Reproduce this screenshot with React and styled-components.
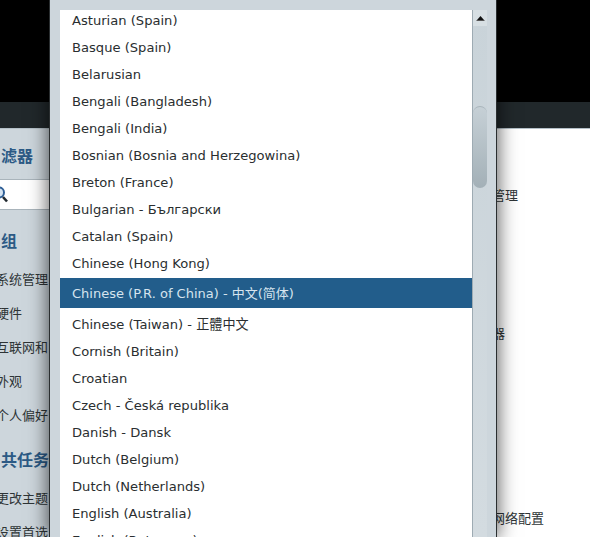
import React from "react";
import styled, { createGlobalStyle } from "styled-components";

const Global = createGlobalStyle`
  html, body { margin: 0; padding: 0; background: #000; }
  body { font-family: "DejaVu Sans", "Noto Sans CJK SC", sans-serif; overflow: hidden; }
`;

const CJK = `"DejaVu Sans", "Noto Sans CJK SC", sans-serif`;

const Screen = styled.div`
  position: relative;
  width: 590px;
  height: 537px;
  overflow: hidden;
  display: flex;
  flex-direction: column;
  background: #000;
`;
const Black = styled.div`height: 102px; flex: none; background: #000;`;
const Toolbar = styled.div`
  height: 26px;
  flex: none;
  background: #21282b;
  border-bottom: 1px solid #b4c0c8;
`;
const Body = styled.div`
  flex: 1;
  display: flex;
  min-height: 0;
`;
const Sidebar = styled.aside`
  width: 60px;
  flex: none;
  background: #cdd6dc;
  display: flex;
  flex-direction: column;
  overflow: hidden;
  padding-top: 17px;
  & > * { flex: none; }
`;
const FilterTitle = styled.h3`
  margin: 0;
  height: 20px;
  font: bold 16px/21px ${CJK};
  color: #2c5a85;
  white-space: nowrap;
  padding-left: 1px;
`;
const SearchBox = styled.div`
  margin-top: 13px;
  height: 29px;
  background: #fff;
  border-top: 1px solid #a9b4bb;
  border-bottom: 1px solid #a9b4bb;
  display: flex;
  align-items: center;
  margin-left: -6px;
`;
const GroupTitle = styled(FilterTitle)`
  margin-top: ${(p) => p.$top}px;
`;
const Item = styled.div`
  margin-top: ${(p) => p.$top ?? 17}px;
  margin-left: -4px;
  height: 17px;
  font: 13px/17px ${CJK};
  color: #2e3436;
  white-space: nowrap;
`;
const Main = styled.main`
  flex: 1;
  background: #fff;
  display: flex;
  flex-direction: column;
  padding-left: 432px;
  padding-top: 58px;
  overflow: hidden;
  & > * { flex: none; }
`;
const MainItem = styled.div`
  margin-top: ${(p) => p.$top ?? 0}px;
  height: 17px;
  font: 13px/17px ${CJK};
  color: #2e3436;
  white-space: nowrap;
`;
const Dialog = styled.div`
  position: absolute;
  left: 49px;
  top: 0;
  width: 448px;
  height: 537px;
  box-sizing: border-box;
  background: #cdd6dc;
  border-left: 1px solid #2a2e30;
  border-right: 1px solid #2a2e30;
  box-shadow: 0 0 18px 1px rgba(0, 0, 0, 0.65);
  padding: 10px 10px 0;
  display: flex;
`;
const List = styled.ul`
  list-style: none;
  margin: 0;
  padding: 0;
  width: 412px;
  flex: none;
  background: #fff;
  overflow: hidden;
  border-right: 1px solid #9eabb3;
`;
const Row = styled.li`
  height: ${(p) => (p.$selected ? 30 : 27)}px;
  line-height: ${(p) => (p.$selected ? 32 : 27)}px;
  margin: ${(p) => (p.$selected ? "1px 0 3px" : "0")};
  padding-left: 12px;
  font-size: ${(p) => (p.$selected ? 13 : 13.1)}px;
  color: ${(p) => (p.$selected ? "#d6e4ee" : "#2a2e30")};
  background: ${(p) => (p.$selected ? "#225d8b" : "transparent")};
  white-space: nowrap;
  &:first-child { margin-top: -3px; }
`;
const Scrollbar = styled.div`
  width: 14px;
  flex: none;
  display: flex;
  flex-direction: column;
  background: linear-gradient(to bottom, #c9d3d9, #d3dbe0);
`;
const ArrowButton = styled.div`
  height: 16px;
  background: #d7dfe3;
  display: flex;
  align-items: center;
  justify-content: center;
  color: #111;
`;
const Thumb = styled.div`
  margin-top: 80px;
  height: 81px;
  border-radius: 7px;
  background: linear-gradient(to bottom, #c6d0d6, #a3b0b7);
  border-top: 1px solid #a8b4bb;
`;

const rows = [
  "Asturian (Spain)", "Basque (Spain)", "Belarusian", "Bengali (Bangladesh)", "Bengali (India)",
  "Bosnian (Bosnia and Herzegowina)", "Breton (France)", "Bulgarian - Български", "Catalan (Spain)",
  "Chinese (Hong Kong)", "Chinese (P.R. of China) - 中文(简体)", "Chinese (Taiwan) - 正體中文",
  "Cornish (Britain)", "Croatian", "Czech - Česká republika", "Danish - Dansk", "Dutch (Belgium)",
  "Dutch (Netherlands)", "English (Australia)", "English (Botswana)",
];

export default function App() {
  return (
    <Screen>
      <Global />
      <Black />
      <Toolbar />
      <Body>
        <Sidebar>
          <FilterTitle>滤器</FilterTitle>
          <SearchBox>
            <svg width="16" height="18" viewBox="0 0 16 18">
              <circle cx="5" cy="6.5" r="5" fill="#d5e4f2" stroke="#2f5f96" strokeWidth="2" />
              <path d="M9 11L13 15.5" stroke="#20282e" strokeWidth="2.6" />
            </svg>
          </SearchBox>
          <GroupTitle $top={21}>组</GroupTitle>
          <Item $top={20}>系统管理</Item>
          <Item>硬件</Item>
          <Item>互联网和</Item>
          <Item>外观</Item>
          <Item>个人偏好</Item>
          <GroupTitle $top={26}>共任务</GroupTitle>
          <Item $top={20}>更改主题</Item>
          <Item>设置首选</Item>
        </Sidebar>
        <Main>
          <MainItem>管理</MainItem>
          <MainItem $top={121}>器</MainItem>
          <MainItem $top={168}>网络配置</MainItem>
        </Main>
      </Body>
      <Dialog>
        <List>
          {rows.map((r) => (
            <Row key={r} $selected={r.startsWith("Chinese (P.R.")}>{r}</Row>
          ))}
        </List>
        <Scrollbar>
          <ArrowButton>
            <svg width="9" height="7" viewBox="0 0 9 7"><path d="M4.5 1L8 5H1z" fill="#111" /><rect x="0.5" y="5" width="8" height="1" fill="#555" /></svg>
          </ArrowButton>
          <Thumb />
        </Scrollbar>
      </Dialog>
    </Screen>
  );
}
